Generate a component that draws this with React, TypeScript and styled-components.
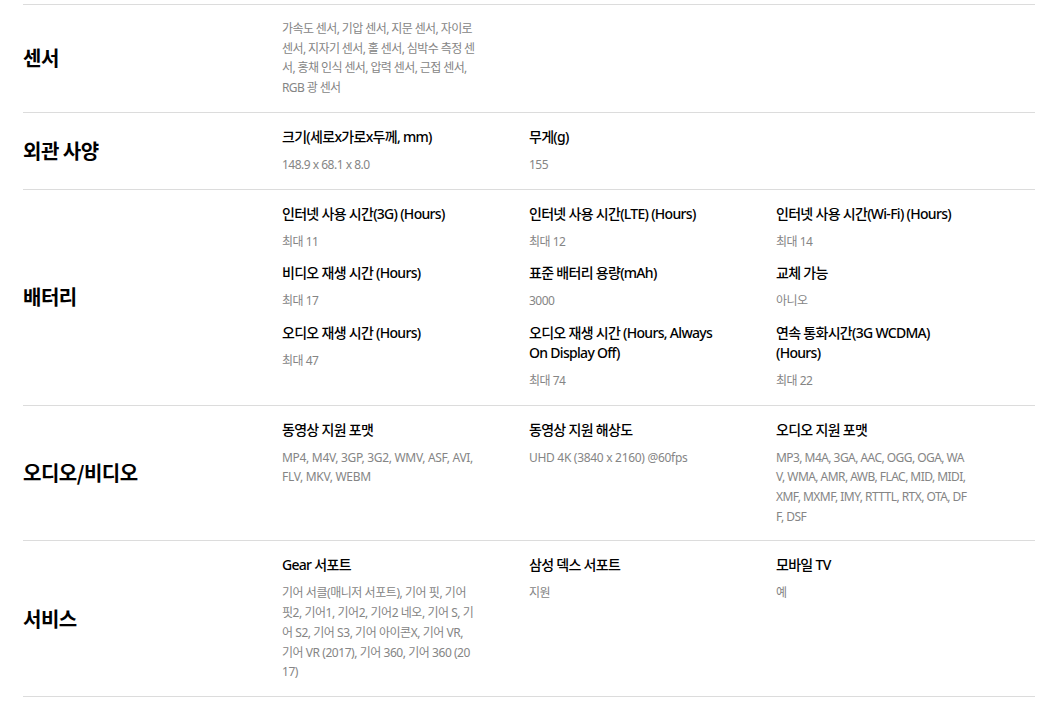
import * as React from 'react';
import styled, { createGlobalStyle } from 'styled-components';

const GlobalStyle = createGlobalStyle`
  html, body {
    margin: 0;
    padding: 0;
    background: #fff;
  }
  body {
    font-family: "Noto Sans", "Noto Sans CJK KR", sans-serif;
    color: #000;
  }
`;

type SpecItem = {
  title?: string;
  value: string;
  tracking?: number;
};

type SpecSection = {
  name: string;
  items: Array<SpecItem>;
};

const SECTIONS: Array<SpecSection> = [
  {
    name: '센서',
    items: [
      { value: '가속도 센서, 기압 센서, 지문 센서, 자이로 센서, 지자기 센서, 홀 센서, 심박수 측정 센서, 홍채 인식 센서, 압력 센서, 근접 센서, RGB 광 센서', tracking: -0.6 },
    ],
  },
  {
    name: '외관 사양',
    items: [
      { title: '크기(세로x가로x두께, mm)', value: '148.9 x 68.1 x 8.0' },
      { title: '무게(g)', value: '155' },
    ],
  },
  {
    name: '배터리',
    items: [
      { title: '인터넷 사용 시간(3G) (Hours)', value: '최대 11' },
      { title: '인터넷 사용 시간(LTE) (Hours)', value: '최대 12' },
      { title: '인터넷 사용 시간(Wi-Fi) (Hours)', value: '최대 14' },
      { title: '비디오 재생 시간 (Hours)', value: '최대 17' },
      { title: '표준 배터리 용량(mAh)', value: '3000' },
      { title: '교체 가능', value: '아니오' },
      { title: '오디오 재생 시간 (Hours)', value: '최대 47' },
      { title: '오디오 재생 시간 (Hours, Always On Display Off)', value: '최대 74' },
      { title: '연속 통화시간(3G WCDMA) (Hours)', value: '최대 22' },
    ],
  },
  {
    name: '오디오/비디오',
    items: [
      { title: '동영상 지원 포맷', value: 'MP4, M4V, 3GP, 3G2, WMV, ASF, AVI, FLV, MKV, WEBM', tracking: -0.3 },
      { title: '동영상 지원 해상도', value: 'UHD 4K (3840 x 2160) @60fps', tracking: -0.3 },
      { title: '오디오 지원 포맷', value: 'MP3, M4A, 3GA, AAC, OGG, OGA, WAV, WMA, AMR, AWB, FLAC, MID, MIDI, XMF, MXMF, IMY, RTTTL, RTX, OTA, DFF, DSF', tracking: -0.55 },
    ],
  },
  {
    name: '서비스',
    items: [
      { title: 'Gear 서포트', value: '기어 서클(매니저 서포트), 기어 핏, 기어 핏2, 기어1, 기어2, 기어2 네오, 기어 S, 기어 S2, 기어 S3, 기어 아이콘X, 기어 VR, 기어 VR (2017), 기어 360, 기어 360 (2017)', tracking: -0.45 },
      { title: '삼성 덱스 서포트', value: '지원' },
      { title: '모바일 TV', value: '예' },
    ],
  },
];

const Page = styled.div`
  padding: 4px 11px 0 23px;
`;

const Section = styled.section`
  display: flex;
  align-items: center;
  border-top: 1px solid #dcdcdc;
  &:last-child {
    border-bottom: 1px solid #dcdcdc;
  }
`;

const SectionName = styled.h3`
  flex: 0 0 259px;
  margin: 0;
  font-family: "Noto Sans CJK KR", sans-serif;
  font-size: 20px;
  font-weight: 700;
  line-height: 28px;
  letter-spacing: -0.5px;
  color: #000;
`;

const ItemsGrid = styled.div`
  flex: 1;
  display: grid;
  grid-template-columns: repeat(3, 247px);
  row-gap: 12px;
  padding: 14px 0 14px;
`;

const Item = styled.div`
  padding-right: 54px;
`;

const ItemTitle = styled.div`
  font-size: 14px;
  font-weight: 500;
  line-height: 20px;
  color: #000;
  letter-spacing: -0.7px;
  margin-bottom: 8px;
`;

const ItemValue = styled.div<{ $tracking: number }>`
  font-size: 12px;
  line-height: 19.7px;
  color: #858585;
  letter-spacing: ${(p) => p.$tracking}px;
  word-break: break-all;
`;

export default function App() {
  return (
    <>
      <GlobalStyle />
      <Page>
        {SECTIONS.map((section) => (
          <Section key={section.name}>
            <SectionName>{section.name}</SectionName>
            <ItemsGrid>
              {section.items.map((item, i) => (
                <Item key={i}>
                  {item.title && <ItemTitle>{item.title}</ItemTitle>}
                  <ItemValue $tracking={item.tracking ?? -0.5}>{item.value}</ItemValue>
                </Item>
              ))}
            </ItemsGrid>
          </Section>
        ))}
      </Page>
    </>
  );
}
